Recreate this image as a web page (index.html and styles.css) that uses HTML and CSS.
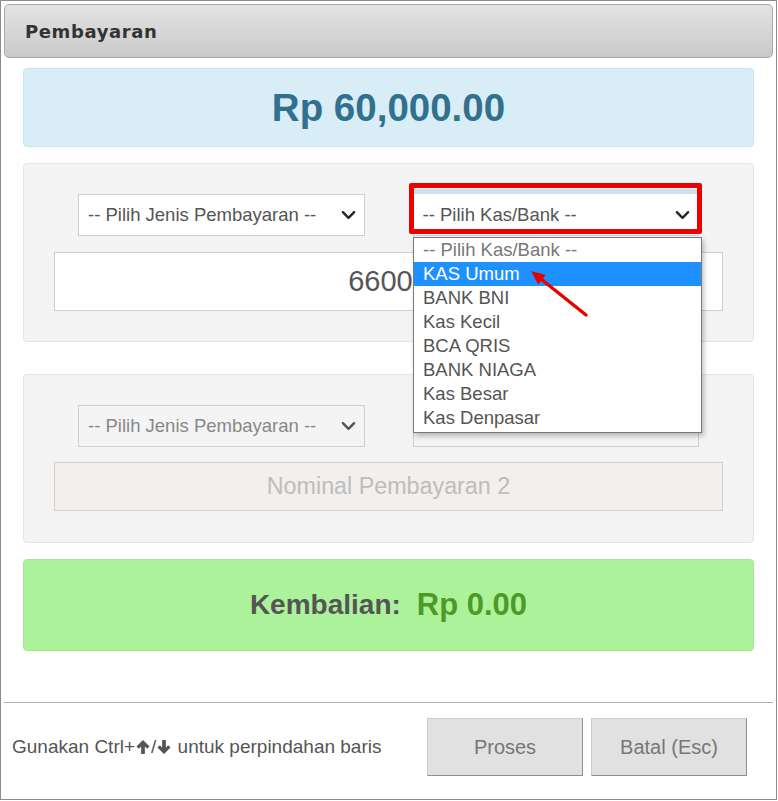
FILE: index.html
```html
<!DOCTYPE html>
<html lang="id">
<head>
    <meta charset="UTF-8">
    <meta name="viewport" content="width=device-width, initial-scale=1.0">
    <title>Pembayaran</title>
    <link rel="stylesheet" href="styles.css">
</head>
<body>
    <div class="dialog">
        <div class="dialog-header">Pembayaran</div>

        <div class="dialog-body">
            <div class="total-box">Rp 60,000.00</div>

            <!-- pembayaran 1 -->
            <div class="pay-panel">
                <div class="select-row">
                    <div class="select-cell">
                        <div class="fake-select">
                            <span>-- Pilih Jenis Pembayaran --</span>
                            <svg class="chevron" viewBox="0 0 16 10"><polyline points="2,2 8,8 14,2"/></svg>
                        </div>
                    </div>
                    <div class="select-cell">
                        <div class="fake-select focused">
                            <span>-- Pilih Kas/Bank --</span>
                            <svg class="chevron" viewBox="0 0 16 10"><polyline points="2,2 8,8 14,2"/></svg>
                        </div>
                    </div>
                </div>
                <div class="amount-input">66000</div>

                <div class="highlight-box"></div>

                <ul class="dropdown-list">
                    <li class="placeholder">-- Pilih Kas/Bank --</li>
                    <li class="active">KAS Umum</li>
                    <li>BANK BNI</li>
                    <li>Kas Kecil</li>
                    <li>BCA QRIS</li>
                    <li>BANK NIAGA</li>
                    <li>Kas Besar</li>
                    <li>Kas Denpasar</li>
                </ul>

                <svg class="pointer-arrow" width="80" height="65" viewBox="0 0 80 65">
                    <line x1="66" y1="55" x2="21" y2="19" />
                    <polygon points="11,11 25.7,15 18.2,24.4" />
                </svg>
            </div>

            <!-- pembayaran 2 (nonaktif) -->
            <div class="pay-panel second">
                <div class="select-row">
                    <div class="select-cell">
                        <div class="fake-select disabled">
                            <span>-- Pilih Jenis Pembayaran --</span>
                            <svg class="chevron" viewBox="0 0 16 10"><polyline points="2,2 8,8 14,2"/></svg>
                        </div>
                    </div>
                    <div class="select-cell">
                        <!-- tertutup daftar dropdown di atas -->
                        <div class="fake-select disabled"></div>
                    </div>
                </div>
                <div class="amount-input disabled">Nominal Pembayaran 2</div>
            </div>

            <div class="change-box">
                <span class="change-label">Kembalian:</span>
                <span class="change-value">Rp 0.00</span>
            </div>
        </div>

        <div class="divider"></div>

        <div class="dialog-footer">
            <div class="hint">Gunakan Ctrl+<svg class="key-arrow" viewBox="0 0 14 15"><path d="M7 0 L14 7 L11.5 9.5 L9 7 V15 H5 V7 L2.5 9.5 L0 7 Z"/></svg>/<svg class="key-arrow" viewBox="0 0 14 15"><path d="M7 15 L14 8 L11.5 5.5 L9 8 V0 H5 V8 L2.5 5.5 L0 8 Z"/></svg> untuk perpindahan baris</div>
            <div class="buttons">
                <button class="btn">Proses</button>
                <button class="btn">Batal (Esc)</button>
            </div>
        </div>
    </div>
</body>
</html>
```

FILE: styles.css
```css
body {
    margin: 0;
    font-family: "Liberation Sans", Arial, sans-serif;
    background-color: #fff;
}
.dialog {
    width: 777px;
    height: 800px;
    box-sizing: border-box;
    border: 1px solid #8c8c8c;
    display: flex;
    flex-direction: column;
    background-color: #fff;
}
.dialog-header {
    margin: 3px 3px 0;
    height: 54px;
    box-sizing: border-box;
    border: 1px solid #a9a9a9;
    border-radius: 5px;
    background: linear-gradient(#e3e3e3, #c9c9c9);
    padding-left: 20px;
    display: flex;
    align-items: center;
    font-family: "DejaVu Sans", sans-serif;
    font-weight: bold;
    font-size: 18px;
    letter-spacing: 0.6px;
    color: #333;
}
.dialog-body {
    flex: 1;
    padding: 10px 22px 0;
}
.total-box {
    height: 79px;
    box-sizing: border-box;
    background-color: #d9edf7;
    border: 1px solid #c4e8f3;
    border-radius: 4px;
    display: flex;
    align-items: center;
    justify-content: center;
    font-size: 38.5px;
    font-weight: bold;
    color: #31708f;
}
.pay-panel {
    position: relative;
    margin-top: 16px;
    padding: 30px;
    background-color: #f4f4f4;
    border: 1px solid #e4e4e4;
    border-radius: 4px;
}
.pay-panel.second {
    margin-top: 32px;
    padding-bottom: 31px;
}
.select-row {
    display: grid;
    grid-template-columns: 1fr 1fr;
    margin-bottom: 16px;
}
.second .select-row {
    margin-bottom: 15px;
}
.select-cell {
    padding: 0 24px;
}
.fake-select {
    height: 42px;
    box-sizing: border-box;
    border: 1px solid #cfcfcf;
    background-color: #fff;
    padding: 0 8px 0 9px;
    display: flex;
    align-items: center;
    justify-content: space-between;
    font-size: 18.5px;
    color: #555;
}
.fake-select.focused {
    border-top-color: #fff;
    box-shadow: 0 -5px 0 #cfe2ec;
}
.fake-select.disabled {
    background-color: #f4f4f4;
    color: #888;
}
.chevron {
    width: 15px;
    height: 10px;
    fill: none;
    stroke: #262626;
    stroke-width: 2.6;
    stroke-linecap: round;
    stroke-linejoin: round;
}
.disabled .chevron {
    stroke: #555;
}
.amount-input {
    height: 59px;
    box-sizing: border-box;
    border: 1px solid #cfcfcf;
    background-color: #fff;
    display: flex;
    align-items: center;
    justify-content: center;
    font-size: 29px;
    color: #555;
}
.amount-input.disabled {
    height: 49px;
    background-color: #f3efec;
    font-size: 23.3px;
    color: #bdbdbd;
}
/* kotak merah penanda */
.highlight-box {
    position: absolute;
    left: 385px;
    top: 19px;
    width: 293px;
    height: 51px;
    box-sizing: border-box;
    border: 5px solid #ee0000;
    border-radius: 2px;
    z-index: 4;
}
.dropdown-list {
    position: absolute;
    left: 389px;
    top: 73px;
    width: 287px;
    margin: 0;
    padding: 0 0 2px;
    list-style: none;
    background-color: #fff;
    border: 1px solid #7a7a7a;
    box-shadow: 2px 3px 5px rgba(0, 0, 0, 0.25);
    z-index: 5;
}
.dropdown-list li {
    height: 24px;
    line-height: 24px;
    padding-left: 9px;
    font-size: 18.5px;
    color: #555;
}
.dropdown-list li.placeholder {
    color: #777;
}
.dropdown-list li.active {
    background-color: #1e90ff;
    color: #fff;
}
.pointer-arrow {
    position: absolute;
    left: 496px;
    top: 96px;
    z-index: 6;
}
.pointer-arrow line {
    stroke: #e80000;
    stroke-width: 3.5;
    stroke-linecap: round;
}
.pointer-arrow polygon {
    fill: #e80000;
}
.change-box {
    margin-top: 16px;
    height: 92px;
    box-sizing: border-box;
    background-color: #acf29b;
    border: 1px solid #a3e792;
    border-radius: 4px;
    display: flex;
    align-items: center;
    justify-content: center;
    gap: 16px;
    font-weight: bold;
}
.change-label {
    font-size: 28px;
    color: #555;
}
.change-value {
    font-size: 31px;
    color: #4e9a26;
}
.divider {
    margin: 0 3px;
    height: 1px;
    background-color: #b0b0b0;
}
.dialog-footer {
    height: 96px;
    box-sizing: border-box;
    padding: 15px 29px 23px 11px;
    display: flex;
    align-items: center;
    justify-content: space-between;
}
.hint {
    font-size: 19px;
    color: #555;
}
.key-arrow {
    width: 14px;
    height: 14px;
    fill: #555;
    margin: 0 1px;
    vertical-align: -1px;
}
.buttons {
    display: flex;
    gap: 8px;
    height: 100%;
}
.btn {
    width: 156px;
    height: 58px;
    font-family: "Liberation Sans", Arial, sans-serif;
    font-size: 20px;
    color: #777;
    background-color: #e1e1e1;
    border: 1px solid #cdcdcd;
    border-right-color: #8d8d8d;
    border-bottom-color: #8d8d8d;
    cursor: pointer;
}
```
